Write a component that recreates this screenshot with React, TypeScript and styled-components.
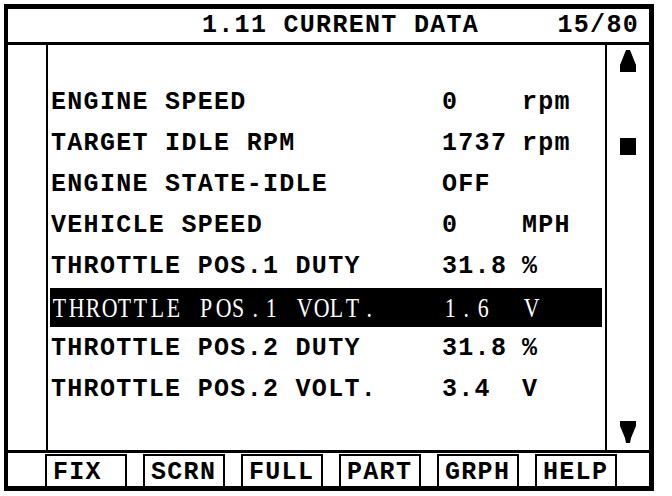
import styled, { createGlobalStyle } from 'styled-components';

// one character cell of the tester's text screen
const CELL = 16.3;

type Item = {
  label: string;
  value: string;
  unit: string;
};

const items: Item[] = [
  { label: 'ENGINE SPEED', value: '0', unit: 'rpm' },
  { label: 'TARGET IDLE RPM', value: '1737', unit: 'rpm' },
  { label: 'ENGINE STATE-IDLE', value: 'OFF', unit: '' },
  { label: 'VEHICLE SPEED', value: '0', unit: 'MPH' },
  { label: 'THROTTLE POS.1 DUTY', value: '31.8', unit: '%' },
  { label: 'THROTTLE POS.1 VOLT.', value: '1.6', unit: 'V' },
  { label: 'THROTTLE POS.2 DUTY', value: '31.8', unit: '%' },
  { label: 'THROTTLE POS.2 VOLT.', value: '3.4', unit: 'V' },
];

const SELECTED = 5;

const keys = ['FIX', 'SCRN', 'FULL', 'PART', 'GRPH', 'HELP'];

const GlobalStyle = createGlobalStyle`
  html, body {
    margin: 0;
    padding: 0;
    background: #fff;
  }
`;

// the highlighted row uses a proportional serif, so each char gets its own cell
const Cells = ({ text }: { text: string }) => (
  <>
    {text.split('').map((ch, i) => (
      <Glyph key={i}>{ch === ' ' ? '\u00a0' : ch}</Glyph>
    ))}
  </>
);

const UpArrow = () => (
  <svg
    width="16"
    height="22"
    viewBox="0 0 16 22"
  >
    <polygon
      points="6,0 10,0 16,15 16,22 0,22 0,15"
      fill="#000"
    />
  </svg>
);

const DownArrow = () => (
  <svg
    width="16"
    height="22"
    viewBox="0 0 16 22"
  >
    <polygon
      points="0,0 16,0 16,5 11,17 10,22 6,22 5,17 0,5"
      fill="#000"
    />
  </svg>
);

export default function App() {
  return (
    <>
      <GlobalStyle />
      <Frame>
        <Header>
          <Title>1.11 CURRENT DATA</Title>
          <Counter>15/80</Counter>
        </Header>
        <Body>
          <Margin />
          <List>
            {items.map((item, i) =>
              i === SELECTED ? (
                <Row
                  key={item.label}
                  $selected
                >
                  <Label>
                    <Cells text={item.label} />
                  </Label>
                  <Value>
                    <Cells text={item.value} />
                  </Value>
                  <Unit>
                    <Cells text={item.unit} />
                  </Unit>
                </Row>
              ) : (
                <Row key={item.label}>
                  <Label>{item.label}</Label>
                  <Value>{item.value}</Value>
                  <Unit>{item.unit}</Unit>
                </Row>
              ),
            )}
          </List>
          <Scroll>
            <UpArrow />
            <Thumb />
            <Spacer />
            <DownArrow />
          </Scroll>
        </Body>
        <Footer>
          {keys.map((k) => (
            <Key key={k}>{k}</Key>
          ))}
        </Footer>
      </Frame>
    </>
  );
}

const Frame = styled.div`
  box-sizing: border-box;
  margin: 4px 0 0 4px;
  width: 650px;
  height: 487px;
  border: 5px solid #000;
  border-left-width: 4px;
  display: flex;
  flex-direction: column;
  font-family: 'Liberation Mono', 'DejaVu Sans Mono', monospace;
  font-weight: 700;
  font-size: 25px;
  letter-spacing: 1.3px;
  color: #000;
`;

const Header = styled.div`
  display: flex;
  align-items: center;
  height: 33px;
  padding: 0 10px 0 194px;
  border-bottom: 3px solid #000;
  white-space: pre;
`;

const Title = styled.span`
  line-height: 1;
`;

const Counter = styled.span`
  margin-left: auto;
  line-height: 1;
`;

const Body = styled.div`
  display: grid;
  grid-template-columns: 40px 559px 1fr;
  height: 405px;
  border-bottom: 3px solid #000;
`;

const Margin = styled.div`
  border-right: 2px solid #000;
`;

const List = styled.div`
  display: flex;
  flex-direction: column;
  gap: 2px;
  padding: 38px 3px 0 2px;
  border-right: 2px solid #000;
`;

const Row = styled.div<{ $selected?: boolean }>`
  display: grid;
  grid-template-columns: 391px 82px 1fr;
  align-items: center;
  height: 39px;
  padding-left: 1px;
  white-space: pre;
  background: ${({ $selected }) => ($selected ? '#000' : 'transparent')};
  color: ${({ $selected }) => ($selected ? '#fff' : '#000')};
  ${({ $selected }) =>
    $selected &&
    `
    font-family: 'Liberation Serif', 'DejaVu Serif', serif;
    font-weight: 400;
    font-size: 28px;
    letter-spacing: 0;
  `}
`;

const Label = styled.span`
  display: flex;
  line-height: 1;
`;

const Value = styled.span`
  display: flex;
  line-height: 1;
`;

const Unit = styled.span`
  display: flex;
  line-height: 1;
  margin-left: -2px;
`;

const Glyph = styled.span`
  display: inline-block;
  width: ${CELL}px;
  text-align: center;
  transform: scaleX(0.78);
`;

const Scroll = styled.div`
  display: flex;
  flex-direction: column;
  align-items: center;
  padding: 5px 0 7px;
`;

const Thumb = styled.div`
  width: 16px;
  height: 17px;
  margin-top: 66px;
  background: #000;
`;

const Spacer = styled.div`
  flex: 1;
`;

const Footer = styled.div`
  display: flex;
  align-items: flex-end;
  gap: 16px;
  flex: 1;
  padding-left: 37px;
`;

const Key = styled.div`
  box-sizing: border-box;
  width: 82px;
  height: 32px;
  display: flex;
  align-items: center;
  padding: 2px 0 0 6px;
  border: 2px solid #000;
  border-bottom: none;
  line-height: 1;
`;
